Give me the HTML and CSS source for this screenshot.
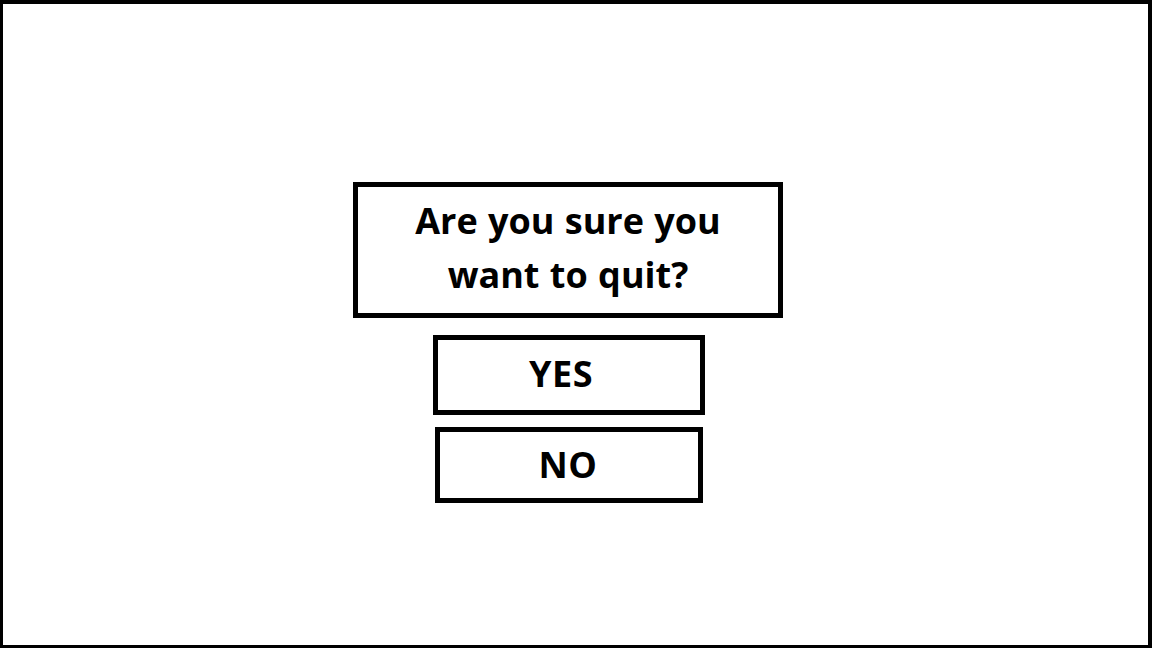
FILE: index.html
```html
<!DOCTYPE html>
<html lang="en">
<head>
    <meta charset="UTF-8">
    <meta name="viewport" content="width=device-width, initial-scale=1.0">
    <title>Quit</title>
    <link rel="stylesheet" href="styles.css">
</head>
<body>
    <div class="screen">
        <div class="quit-dialog">
            <div class="quit-box">
                <h2>Are you sure you<br>want to quit?</h2>
            </div>
            <button type="button" class="btn btn-yes">YES</button>
            <button type="button" class="btn btn-no">NO</button>
        </div>
    </div>
</body>
</html>
```

FILE: styles.css
```css
html, body {
    margin: 0;
    height: 100%;
    background: #fff;
}
.screen {
    box-sizing: border-box;
    height: 648px;
    border-style: solid;
    border-color: #000;
    border-width: 4px 4px 3px 3px;
    padding: 178px 0 0 350px;
    font-family: 'Open Sans', 'Lato', sans-serif;
}
.quit-dialog {
    width: 430px;
    display: flex;
    flex-direction: column;
    align-items: center;
}
.quit-box {
    box-sizing: border-box;
    width: 430px;
    height: 136px;
    border: 5px solid #000;
    display: flex;
    align-items: center;
    justify-content: center;
    padding-bottom: 4px;
}
.quit-box h2 {
    margin: 0;
    font-size: 36px;
    line-height: 54px;
    font-weight: 700;
    word-spacing: 1px;
    text-align: center;
    color: #000;
}
.btn {
    box-sizing: border-box;
    border: 5px solid #000;
    background: #fff;
    color: #000;
    font-family: inherit;
    font-size: 36px;
    font-weight: 700;
    letter-spacing: 0.5px;
    padding: 0;
    cursor: pointer;
}
.btn-yes {
    width: 272px;
    height: 80px;
    margin-top: 17px;
    margin-left: 2px;
    padding: 0 16px 4px 0;
}
.btn-no {
    width: 268px;
    height: 76px;
    margin-top: 12px;
    margin-left: 2px;
    padding: 0 2px 2px 0;
}
```
